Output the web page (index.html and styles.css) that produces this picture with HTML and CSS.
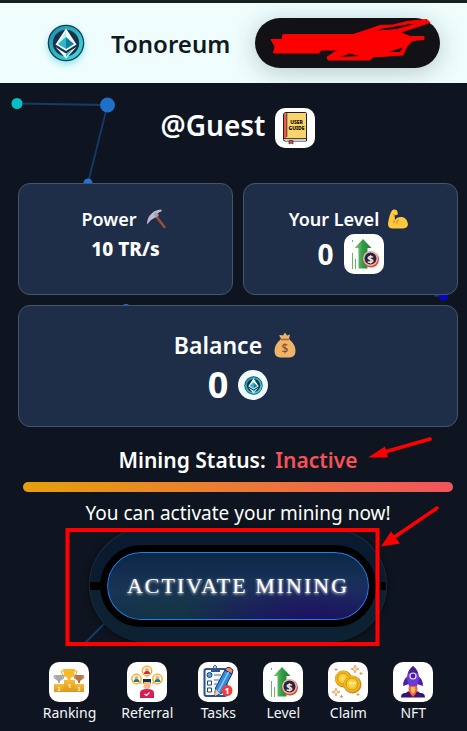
FILE: index.html
```html
<!DOCTYPE html>
<html lang="en">
<head>
<meta charset="utf-8">
<meta name="viewport" content="width=device-width, initial-scale=1">
<title>Tonoreum</title>
<link rel="stylesheet" href="styles.css">
</head>
<body>
<svg class="defs" width="0" height="0" aria-hidden="true">
  <defs>
    <linearGradient id="teal" x1="0" y1="0" x2="1" y2="1"><stop offset="0" stop-color="#1b8fa8"/><stop offset="1" stop-color="#3fe0e0"/></linearGradient>
    <linearGradient id="green" x1="0" y1="0" x2="1" y2="0"><stop offset="0" stop-color="#8ccf80"/><stop offset=".5" stop-color="#2f9a45"/><stop offset="1" stop-color="#23803a"/></linearGradient>
    <linearGradient id="gold" x1="0" y1="0" x2="0" y2="1"><stop offset="0" stop-color="#f7bd35"/><stop offset="1" stop-color="#dc971c"/></linearGradient>
    <radialGradient id="coin-gold"><stop offset="0" stop-color="#ffe45c"/><stop offset="1" stop-color="#eeb018"/></radialGradient>
  </defs>
  <symbol id="ether" viewBox="0 0 38 38">
    <circle cx="19" cy="19" r="18.3" fill="#1c3a56"/>
    <circle cx="19" cy="19" r="17" fill="url(#teal)"/>
    <circle cx="19" cy="19" r="13.2" fill="#17304d"/>
    <path d="M19 4.500 8.500 20.500 19 27l10.500-6.500z" fill="#f2ffff"/>
    <path d="M19 7v9.500l-8 4z" fill="#b9f0f2"/>
    <path d="M19 13 11 20l8 5z" fill="#2bb7cb"/>
    <path d="M19 13 27 20l-8 5z" fill="#147f9c"/>
    <path d="M8.500 23 19 29.500 29.500 23 19 34.500z" fill="#e9ffff"/>
    <path d="m19 29.500 6-3.500-6 7z" fill="#35b9c5"/>
  </symbol>
  <symbol id="growth" viewBox="0 0 40 40">
    <path d="M19 5 27.500 14H23.500V34.500H14.500V14H10.500z" fill="url(#green)"/>
    <path d="M8.500 19v16M11.500 25v10M8.500 6v2" stroke="#64b86a" stroke-width="1"/>
    <circle cx="27" cy="25.500" r="8" fill="#d94d35"/>
    <circle cx="26.500" cy="24.500" r="7.500" fill="#f5b59b"/>
    <circle cx="26.500" cy="24.500" r="6" fill="#20264d"/>
  </symbol>
</svg>

<header class="topbar">
  <svg class="logo" role="img" aria-label="Tonoreum logo"><use href="#ether"/></svg>
  <span class="brand">Tonoreum</span>
  <button class="account" type="button" aria-label="Account">
    <svg viewBox="0 0 185 50" aria-hidden="true">
      <path fill="red" fill-rule="evenodd" stroke="red" stroke-width="1" stroke-linejoin="round" d="M16 21.500H27L28 16.500H98L112 12 125 7.500 138 7 152 3.500 172 1.500 175 4.500 145 14.500 155 18.500H169V21.500L158 22.500 152 28 148 37 118 39 115 42H73L72 39 83 32H66L64 35H18.500L20 28.500zM118 13.500 142 11.500 166 4.500 152 6 128 10zM82 39.500 108 38.500 95 35zM131 34.500H145L149 28.500z"/>
    </svg>
  </button>
</header>

<main class="page">
  <svg class="network" viewBox="0 0 467 648" aria-hidden="true">
    <path d="M17 20.500 107.500 22 88 100M434 212.500h10M85 560l15-15 30-30" fill="none" stroke="#153b68" stroke-width="1.800"/>
    <circle cx="17" cy="20.500" r="5.500" fill="#07bfc3"/>
    <circle cx="107.500" cy="22" r="7.500" fill="#1e70c9"/>
    <circle cx="88" cy="100" r="4.500" fill="#2373d0"/>
    <circle cx="126" cy="225" r="4" fill="#2373d0"/>
    <circle cx="443.500" cy="213" r="4.500" fill="#0505c8"/>
  </svg>

  <div class="identity">
    <h1>@Guest</h1>
    <a class="tile" href="#guide" aria-label="User guide">
      <svg viewBox="0 0 40 40" aria-hidden="true">
        <path d="M11 4.500h19.500a1 1 0 0 1 1 1V33H10a1.500 1.500 0 0 1-1.500-1.500V7A2.500 2.500 0 0 1 11 4.500z" fill="#fbd36b" stroke="#202020"/>
        <path d="M9 6.500 11.500 5v24.500L9 31z" fill="#f05350"/>
        <path d="M11.800 5v24M9 30.500h22" stroke="#202020" stroke-width=".8"/>
        <path d="M10 31h21v2H10z" fill="#c5cad6"/>
        <path d="M14 32.500h4V36l-2-1-2 1z" fill="#f0403e" stroke="#202020" stroke-width=".6"/>
        <text x="21.500" y="15.500" class="icon-text" font-size="5">USER</text>
        <text x="21.500" y="21.500" class="icon-text" font-size="5">GUIDE</text>
      </svg>
    </a>
  </div>

  <section class="stats">
    <article class="card">
      <h2 class="card-label">Power
        <svg class="emoji" viewBox="0 0 20 20" role="img" aria-label="pickaxe"><path d="m9 6 9.500 12" stroke="#9b4d35" stroke-width="2.500" stroke-linecap="round"/><path d="M1 15.500C1 8 6 1 15 .500L16 2 12 4 10 8 5 11z" fill="#c2b7cc"/><path d="m8 6 3 2.500 2-2.500-3-3z" fill="#a89bb5"/></svg>
      </h2>
      <p class="power">10 TR/s</p>
    </article>
    <article class="card">
      <h2 class="card-label">Your Level
        <svg class="emoji" viewBox="0 0 20 20" role="img" aria-label="flexed biceps"><path d="M4 1.500Q6-.5 9 1.500L10 5Q8 7 6.500 6L7 11Q9 7.500 14 8q5 1 6 7 0 4-5 4.500H4Q0 19 0 15 1 6 4 1.500z" fill="#ffc83d"/><path d="M5 5.500 7 6M6.500 11l-1 3M9 15q-1-3 2-4" stroke="#d5921e" stroke-width="1.200" fill="none"/></svg>
      </h2>
      <p class="level">0 <span class="tile"><svg viewBox="0 0 40 40" role="img" aria-label="Level"><use href="#growth" width="40" height="40"/><text x="26.500" y="28.500" class="icon-text" font-size="11" fill="#ffe0c8">$</text></svg></span></p>
    </article>
    <article class="card card-wide">
      <h2 class="balance-label">Balance
        <svg class="bag" viewBox="0 0 22 26" role="img" aria-label="money bag"><path d="m7 3 2 .5L11 .5l2 3 3-1-1 4 1 1.500q5.500 4.500 5.500 11 0 6-6 6.500H6.500Q.5 25 .5 19 .5 12.500 6 8l1-1.500-2-3z" fill="#efb36a"/><path d="M7 7.500h8" stroke="#a96532" stroke-width="1.500"/><text x="11" y="21" class="bag-text" font-size="12" fill="#8b5428">$</text></svg>
      </h2>
      <p class="balance">0 <span class="coin"><svg role="img" aria-label="Tonoreum coin"><use href="#ether"/></svg></span></p>
    </article>
  </section>

  <section class="mining">
    <h2 class="status">Mining Status: <span class="inactive">Inactive</span></h2>
    <div class="bar"></div>
    <p class="message">You can activate your mining now!</p>
    <div class="dock">
      <button class="activate" type="button">ACTIVATE MINING</button>
    </div>
  </section>

  <nav class="menu">
    <a href="#ranking"><span class="tile">
      <svg viewBox="0 0 40 40" aria-hidden="true">
        <path d="M5 22h10v8H5zM25 22h10v8H25z" fill="url(#gold)"/><path d="M15 18h11v12H15z" fill="url(#gold)"/>
        <path d="M14 7h12q0 7-4.500 9v2h-3v-2Q14 14 14 7z" fill="#f8b928"/><path d="M14 9h-2q0 4 4 5m10-5h2q0 4-4 5" fill="none" stroke="#f0ad25"/>
        <path d="M6 13h8q0 5-3 6v2H9v-2q-3-1-3-6z" fill="#a8a8a8"/><path d="M6 14H5q0 3 2 3m7-3h1q0 3-2 3" fill="none" stroke="#999"/>
        <path d="M26 13h8q0 5-3 6v2h-2v-2q-3-1-3-6z" fill="#b97645"/><path d="M26 14h-1q0 3 2 3m7-3h1q0 3-2 3" fill="none" stroke="#b97645"/>
        <text x="20.500" y="26" class="icon-text" font-size="6" fill="#fff2c0">1</text><text x="10" y="28.500" class="icon-text" font-size="5" fill="#fff2c0">2</text><text x="30" y="28.500" class="icon-text" font-size="5" fill="#fff2c0">3</text>
      </svg></span>Ranking</a>
    <a href="#referral"><span class="tile">
      <svg viewBox="0 0 40 40" aria-hidden="true">
        <g fill="#fff" stroke="#fbae24" stroke-width="1.500"><circle cx="20" cy="9" r="4.700"/><circle cx="9.500" cy="17" r="4.700"/><circle cx="30.500" cy="17" r="4.700"/></g>
        <path d="m18.500 13 1.500 3 1.500-3zM12 21l3 1.500-1-3.500zM28 21l-3 1.500 1-3.500z" fill="#fbae24"/>
        <g fill="#f8a56b"><circle cx="20" cy="8" r="2"/><circle cx="9.500" cy="16" r="2"/><circle cx="30.500" cy="16" r="2"/></g>
        <path d="M17 12q0-3 3-3t3 3z" fill="#d2204e"/><path d="M6.500 20q0-3 3-3t3 3zM27.500 20q0-3 3-3t3 3z" fill="#16808a"/>
        <path d="M16.500 20h7v5q-3.500 5-7 0z" fill="#ffb987"/><path d="M16 22v-5h8v5l-1-2h-6z" fill="#17314d"/>
        <path d="M13 36v-5q0-4 7-4t7 4v5z" fill="#d31f55"/><path d="m17.500 32 2 1.500 3-3" fill="none" stroke="#fff" stroke-width="1.200"/>
      </svg></span>Referral</a>
    <a href="#tasks"><span class="tile">
      <svg viewBox="0 0 40 40" aria-hidden="true">
        <rect x="6.500" y="7" width="22" height="27" rx="2" fill="#f5f8ff" stroke="#2b5093" stroke-width="2"/>
        <path d="M13 6h9v4h-9z" fill="#34528b"/><circle cx="17" cy="5" r="1.500" fill="#fff" stroke="#34528b"/>
        <circle cx="11.500" cy="13" r="2.500" fill="#4caae8" stroke="#25416e"/>
        <path d="M9.500 19h4v4h-4zM9.500 26h4v4h-4z" fill="#fff" stroke="#25416e"/>
        <path d="M16 13h7M16 18h6M16 22h3M16 30h4" stroke="#536b94" stroke-width="1.200"/>
        <path d="m27 8 7 4-10 19-7 3 .5-8z" fill="#318de2" stroke="#183163"/><path d="m27 8 2-2.500q3-1 6 2.500L34 12z" fill="#f68b68" stroke="#183163"/><path d="m30.500 10-10 19" stroke="#8fd0ff" stroke-width="1.500"/><path d="m17.500 27-.5 7 5-2.500z" fill="#ffc99d"/>
        <circle cx="29" cy="28.500" r="5.500" fill="#ef3e3e"/><text x="29" y="31.500" class="icon-text" font-size="8" fill="#fff">1</text>
      </svg></span>Tasks</a>
    <a href="#level"><span class="tile"><svg viewBox="0 0 40 40" aria-hidden="true"><use href="#growth" width="40" height="40"/><text x="26.500" y="28.500" class="icon-text" font-size="11" fill="#ffe0c8">$</text></svg></span>Level</a>
    <a href="#claim"><span class="tile">
      <svg viewBox="0 0 40 40" aria-hidden="true">
        <circle cx="15.500" cy="17" r="8.500" fill="#ce8616"/><circle cx="15" cy="16.500" r="7.800" fill="url(#coin-gold)"/><circle cx="15" cy="16.500" r="5.500" fill="none" stroke="#cf9517"/>
        <circle cx="24.500" cy="22.500" r="9" fill="#ce8616"/><circle cx="24" cy="22" r="8.300" fill="url(#coin-gold)"/><circle cx="24" cy="22" r="6" fill="none" stroke="#cf9517"/><path d="M21 21h2.500M25 21h2.500" stroke="#fff8b0" stroke-width="2"/>
        <path d="m27 3 1 3 3 1-3 1-1 3-1-3-3-1 3-1zM8 26l1 3 3 1-3 1-1 3-1-3-3-1 3-1z" fill="#ffe9b5" stroke="#ed9654" stroke-width=".8"/>
        <path d="M8 6v3M6.500 7.500h3M33 10v3M31.500 11.500h3M13.500 33v3M12 34.500h3M30 31v3M28.500 32.500h3" stroke="#ed9654"/>
      </svg></span>Claim</a>
    <a href="#nft"><span class="tile">
      <svg viewBox="0 0 40 40" aria-hidden="true">
        <path d="M8 35.500q0-5 5-4.500 2-3 5-1h4q3-2 5 1 5-.5 5 4.500z" fill="#38166e"/>
        <path d="M15 14q-5 3-5 10l6-2zM25 14q5 3 5 10l-6-2z" fill="#4c1fa6"/>
        <path d="M20 4q6 5 6 12 0 4-2 8h-8q-2-4-2-8 0-7 6-12z" fill="#6d3bd4"/><path d="M20 4q4 3 5 7H15q1-4 5-7z" fill="#452092"/>
        <circle cx="20" cy="14" r="3" fill="#4520a0" stroke="#e6dcff" stroke-width="1.200"/>
        <path d="M16 24h8q2 5-4 11-6-6-4-11z" fill="#fb5948"/><path d="M18 25h4q1 4-2 7-3-3-2-7z" fill="#ffc34c"/>
      </svg></span>NFT</a>
  </nav>

  <svg class="marks" viewBox="0 0 467 648" aria-hidden="true">
    <rect x="67.500" y="447" width="310" height="114" fill="none" stroke="red" stroke-width="4"/>
    <path d="m430 356-49 14M437 425l-44 30" stroke="red" stroke-width="3.500" stroke-linecap="round"/>
    <path d="m368 374.500 17-11 3 11zM381 463.500l10-15 9 12z" fill="red"/>
  </svg>
</main>
</body>
</html>
```
FILE: styles.css
```css
* {
  box-sizing: border-box;
}

body {
  margin: 0;
  background: #0e1520;
  color: #fff;
  font-family: "Noto Sans", "Open Sans", sans-serif;
}

h1,
h2,
p {
  margin: 0;
}

svg {
  display: block;
}

button {
  font: inherit;
  color: inherit;
  cursor: pointer;
}

.defs {
  position: absolute;
}

.icon-text,
.bag-text {
  font-family: "Noto Sans", sans-serif;
  font-weight: 800;
  text-anchor: middle;
}

.bag-text {
  font-weight: 500;
}

.topbar {
  display: flex;
  align-items: center;
  height: 83px;
  padding: 0 27px 0 47px;
  border-top: 3px solid #15211f;
  background: #effdfd;
  overflow: hidden;
}

.logo {
  width: 38px;
  height: 38px;
  filter: drop-shadow(0 3px 3px #8de5ec);
}

.brand {
  margin-left: 26px;
  color: #0e1922;
  font-size: 24px;
  font-weight: 600;
}

.account {
  width: 185px;
  height: 50px;
  margin-left: auto;
  padding: 0;
  border: 0;
  border-radius: 25px;
  background: #121216;
  box-shadow: 0 4px 24px rgba(20, 50, 50, 0.25);
}

.account svg {
  width: 100%;
  overflow: visible;
}

.page {
  position: relative;
  padding: 25px 9px 7px 18px;
}

.network,
.marks {
  position: absolute;
  top: 0;
  left: 0;
  width: 100%;
  pointer-events: none;
}

.identity {
  position: relative;
  display: flex;
  justify-content: center;
  align-items: center;
  gap: 10px;
  margin-bottom: 35px;
}

.identity h1 {
  padding-bottom: 6px;
  font-size: 28px;
  font-weight: 600;
  line-height: 34px;
}

.tile {
  display: block;
  width: 40px;
  height: 40px;
  border-radius: 10px;
  background: #fff;
}

.tile svg {
  width: 40px;
  height: 40px;
}

.stats {
  position: relative;
  display: grid;
  grid-template-columns: 1fr 1fr;
  gap: 10px;
}

.card {
  padding: 20px 10px;
  border: 1px solid #465567;
  border-radius: 12px;
  background: #1e2e48;
  text-align: center;
}

.card-wide {
  grid-column: 1 / -1;
}

.card-label,
.balance-label,
.level,
.balance {
  display: flex;
  justify-content: center;
  align-items: center;
}

.card-label {
  gap: 9px;
  padding-right: 4px;
  font-size: 18px;
  font-weight: 600;
  line-height: 30px;
}

.emoji {
  width: 20px;
  height: 20px;
}

.power {
  font-size: 19px;
  font-weight: 800;
  line-height: 30px;
}

.level {
  gap: 10px;
  font-size: 28px;
  font-weight: 700;
  line-height: 40px;
}

.balance-label {
  gap: 12px;
  padding-right: 6px;
  font-size: 23px;
  font-weight: 600;
  line-height: 38px;
}

.bag {
  width: 22px;
  height: 26px;
}

.balance {
  gap: 10px;
  font-size: 36px;
  font-weight: 700;
  line-height: 42px;
}

.coin {
  display: grid;
  place-items: center;
  width: 30px;
  height: 30px;
  border-radius: 50%;
  background: #effdfd;
}

.coin svg {
  width: 19px;
  height: 19px;
}

.mining {
  position: relative;
  margin-top: 15px;
  text-align: center;
}

.status {
  font-size: 21px;
  font-weight: 600;
  line-height: 36px;
}

.inactive {
  margin-left: 4px;
  color: #f45257;
}

.bar {
  height: 10px;
  margin: 4px 5px 6px;
  border-radius: 5px;
  background: linear-gradient(90deg, #e5a00d, #f2545b);
}

.message {
  font-size: 19px;
  line-height: 30px;
}

.dock {
  display: flex;
  justify-content: center;
  width: 298px;
  margin: 0 auto;
  padding: 16px 10px 15px;
  border: 1px solid #1c2b38;
  border-bottom: 0;
  border-radius: 57px;
  background: linear-gradient(#0b1b2f 0 53px, #000 53px 61px, #0c2233 61px);
  box-shadow: 0 1px 6px rgba(0, 0, 0, 0.6);
}

.activate {
  flex: 1;
  height: 82px;
  padding: 0;
  border: 7px solid #000;
  border-radius: 41px;
  background:
    radial-gradient(ellipse at 78% 100%, rgba(34, 8, 105, 0.8), rgba(34, 8, 105, 0) 45%),
    radial-gradient(ellipse at 25% 85%, rgba(20, 55, 65, 0.8), rgba(20, 55, 65, 0) 50%),
    linear-gradient(#0c2743, #1a3460 60%, #122b4d);
  box-shadow: inset 0 0 0 1px #1d80f0;
  font-family: "Liberation Serif", serif;
  font-size: 22px;
  letter-spacing: 2px;
  text-shadow: 0 1px 3px #fff;
}

.menu {
  position: relative;
  display: flex;
  justify-content: center;
  gap: 25px;
  margin-top: 20px;
}

.menu a {
  display: flex;
  flex-direction: column;
  align-items: center;
  color: #f4f6f8;
  font-size: 14px;
  line-height: 22px;
  text-decoration: none;
}
```
